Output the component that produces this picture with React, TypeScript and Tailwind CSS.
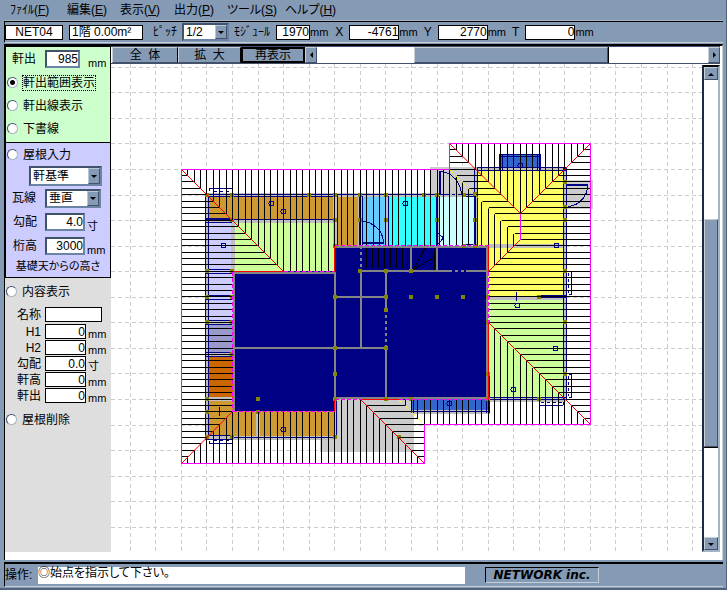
import { useState } from 'react'
import type { ReactNode } from 'react'

const MENUS = [
    { text: 'ﾌｧｲﾙ', mnemonic: 'F', width: 'w-[57px]' },
    { text: '編集', mnemonic: 'E', width: 'w-[53px]' },
    { text: '表示', mnemonic: 'V', width: 'w-[54px]' },
    { text: '出力', mnemonic: 'P', width: 'w-[53px]' },
    { text: 'ツール', mnemonic: 'S', width: 'w-[58px]' },
    { text: 'ヘルプ', mnemonic: 'H', width: 'w-[58px]' },
]

// Roof module: 1 unit = a quarter of the grid pitch
const UNIT = 6.39
const X = (n: number) => Math.floor(181.4 + UNIT * n) + 0.5
const Y = (n: number) => Math.floor(169.1 + UNIT * n) + 0.5

const line = (x1: number, y1: number, x2: number, y2: number) =>
    `M${X(x1)} ${Y(y1)}L${X(x2)} ${Y(y2)}`

const range = (from: number, to: number) =>
    Array.from({ length: to - from + 1 }, (_, i) => from + i)

const vertical = (from: number, to: number, top: (x: number) => number, bottom: (x: number) => number) =>
    range(from, to).map(x => line(x, top(x), x, bottom(x))).join('')

const horizontal = (from: number, to: number, left: (y: number) => number, right: (y: number) => number) =>
    range(from, to).map(y => line(left(y), y, right(y), y)).join('')

const HATCH = [
    // north-west wing
    vertical(1, 16, () => 0, x => x),
    vertical(17, 23, () => 0, () => 16),
    vertical(24, 42, () => 0, () => 12),
    vertical(43, 47, x => x - 42, () => 12),
    vertical(48, 52, x => x - 42, x => 64 - x),
    horizontal(1, 16, () => 0, y => y),
    horizontal(17, 38, () => 0, () => 8),
    horizontal(39, 45, () => 0, y => 46 - y),
    // north-east hip
    vertical(43, 53, () => -4, x => x - 46),
    vertical(54, 63, () => -4, x => 60 - x),
    horizontal(-3, -1, () => 42, y => y + 46),
    horizontal(0, 7, y => y + 42, y => y + 46),
    horizontal(8, 10, y => y + 42, () => 53),
    horizontal(-3, 6, y => 60 - y, () => 64),
    horizontal(7, 11, () => 53, () => 64),
    horizontal(12, 16, y => 64 - y, () => 64),
    horizontal(17, 24, () => 48, () => 64),
    horizontal(25, 39, y => y + 24, () => 64),
    // south side
    vertical(49, 63, x => x - 24, () => 40),
    vertical(38, 48, () => 36, () => 40),
    vertical(34, 37, () => 36, x => x + 2),
    vertical(24, 28, () => 36, () => 46),
    vertical(29, 37, x => x + 8, () => 46),
    horizontal(37, 39, y => y - 8, y => y - 2),
    horizontal(40, 45, y => y - 8, () => 38),
    vertical(8, 23, () => 38, () => 46),
    vertical(1, 7, x => 46 - x, () => 46),
].join('')

const HIPS = [
    line(0, 0, 16, 16), line(42, -4, 53, 7), line(64, -4, 53, 7), line(53, 11, 48, 16),
    line(48, 24, 64, 40), line(8, 38, 0, 46), line(28, 36, 38, 46),
].join('')

const RIDGE_ENDS = [
    line(8, 16, 16, 16), line(24, 12, 24, 16), line(48, 12, 48, 16),
    line(24, 36, 24, 38), line(28, 36, 34, 36), line(48, 24, 48, 36),
].join('')

const WALL_CONTACT = [
    line(16, 16, 24, 16), line(24, 12, 48, 12), line(8, 16, 8, 38), line(8, 38, 24, 38),
    line(24, 36, 28, 36), line(34, 36, 48, 36), line(48, 16, 48, 24),
].join('')

const OUTLINE = [[0, 0], [42, 0], [42, -4], [64, -4], [64, 40], [38, 40], [38, 46], [0, 46]]
    .map(([x, y]) => `${X(x)},${Y(y)}`).join(' ')

// x, y, width, height, colour
const ROOMS: [number, number, number, number, string][] = [
    [430, 167, 46, 29, '#cccccc'], [565, 180, 28, 29, '#cccccc'], [320, 399, 94, 53, '#cccccc'],
    [207, 194, 128, 27, '#cc9933'], [335, 194, 24, 52, '#cc9933'],
    [360, 194, 27, 52, '#66ccff'], [387, 194, 50, 52, '#33ffff'], [437, 194, 40, 52, '#ccffff'],
    [232, 220, 103, 52, '#ccff99'], [207, 220, 26, 103, '#ccccff'],
    [207, 323, 26, 31, '#9999cc'], [207, 354, 26, 44, '#cc6600'],
    [207, 398, 26, 41, '#cc9933'], [232, 411, 103, 28, '#cc9933'],
    [476, 169, 89, 128, '#ffff66'], [488, 297, 77, 103, '#ccff99'],
    [500, 155, 40, 14, '#3366cc'], [412, 399, 76, 13, '#3366cc'],
]

const WALLS =
    'M206 195H477M206 221H335M207 194V440M233 220V272M335 194V246M360 194V246M387 194V246' +
    'M437 194V246M476 169V246M474 169H566M565 167V400M488 246H565M488 298H566M488 400H566' +
    'M206 323H232M206 354H232M206 399H232M206 438H336M258 411V438M336 411V438M412 412H490'

const FRAMES =
    'M206 194.5H449M206 196.5H335M206 219.5H335M205.5 194V440M208.5 194V440M206 218.5H232M206 222.5H232' +
    'M206 269.5H232M206 273.5H232M206 295.5H232M206 299.5H232M206 320.5H232M206 324.5H232M206 352.5H232' +
    'M206 356.5H232M334.5 194V246M337.5 194V246M359.5 196V246M362.5 196V246M385.5 196V246M388.5 196V246' +
    'M436.5 196V246M439.5 196V246M474.5 168V246M477.5 168V246M477 167.5H566M477 170.5H566M563.5 168V400' +
    'M566.5 168V400M540 295.5H566M540 297.5H566M489 397.5H566M489 399.5H566M232 437.5H335M206 435.5H232' +
    'M206 439.5H232M336.5 399V437M464 194.5H477M464 196.5H477M464 244.5H477M499.5 154V170M502.5 154V170' +
    'M537.5 154V170M540.5 154V170M499 154.5H541M500 156.5H540M411.5 399V413M413.5 399V413M411 411.5H490' +
    'M486.5 399V413M489.5 376V413M209.5 191V188.5H232.5V191M209.5 441V443.5H232.5V441M571.5 271.5V294.5' +
    'M569 271.5H571.5M569 294.5H571.5M569 374.5H571.5V397.5H569M539.5 402V405.5H563M563.5 402V405' +
    'M516.5 292V301M219.5 407V416M412 399.5H384'

const PARTITIONS =
    'M233 348H386M335 272V411M361 247V348M386 271V399M335 297H386M360 271H488M411 247V271' +
    'M437 247V271M234 272V411M233 273H335M335 247H488M335 398H488M487 246V399'

// centre points of the posts
const POSTS = [
    [207, 195], [232, 195], [309, 195], [335, 195], [360, 195], [386, 195], [424, 195], [437, 195], [464, 195],
    [232, 220], [335, 220], [360, 220], [386, 220], [437, 220], [475, 220], [335, 246], [464, 246], [475, 246],
    [207, 271], [232, 271], [360, 271], [386, 271], [411, 271], [207, 297], [232, 297], [335, 297], [386, 297],
    [411, 297], [437, 297], [463, 297], [488, 297], [539, 297], [207, 322], [232, 322], [386, 310], [488, 322],
    [565, 322], [232, 354], [335, 348], [386, 348], [335, 374], [488, 374], [565, 374], [207, 399], [258, 399],
    [335, 399], [386, 399], [411, 399], [539, 399], [207, 412], [258, 412], [207, 437], [232, 437], [335, 437],
    [399, 437], [565, 182], [565, 207], [565, 220], [565, 271], [488, 399], [475, 194],
]

const SYMBOLS = [
    [271, 203], [283, 211], [223, 245], [405, 203], [520, 165], [556, 245],
    [517, 305], [555, 348], [513, 389], [283, 429], [449, 403],
]

const FloorPlan = () => (
    <svg
        className="block max-w-none"
        width="593"
        height="489"
        viewBox="111 64 593 489"
        shapeRendering="crispEdges"
        fill="none"
        role="img"
        aria-label="屋根伏図"
    >
        {/* Grid */}
        <g stroke="#cccccc" strokeDasharray="4 3">
            {range(0, 22).map(i => (
                <line key={i} x1={Math.floor(130.3 + i * 25.56) + 0.5} x2={Math.floor(130.3 + i * 25.56) + 0.5} y1={64} y2={552} />
            ))}
            {range(0, 18).map(i => (
                <line key={i} y1={Math.floor(67.2 + i * 25.56) + 0.5} y2={Math.floor(67.2 + i * 25.56) + 0.5} x1={111} x2={702} />
            ))}
        </g>

        {/* Rooms and walls */}
        {ROOMS.map(([x, y, w, h, color]) => (
            <rect key={`${x}-${y}`} x={x} y={y} width={w} height={h} fill={color} />
        ))}
        <path d={WALLS} stroke="#c0c0c0" strokeWidth={4} />
        <path d={FRAMES} stroke="#000084" />
        <path d="M214 191.5H232M214 440.5H232M568.5 273V293M568.5 376V396M541 402.5H562M440 194.5H474" stroke="#000084" strokeDasharray="3 3" />
        <rect x={233} y={271} width={102} height={140} fill="#000084" />
        <rect x={335} y={246} width={153} height={153} fill="#000084" />
        <path d={PARTITIONS} stroke="#848484" strokeWidth={2} />
        <path d="M386 312V346M361 249V269M452 271H466" stroke="#000084" strokeWidth={2} strokeDasharray="3 3" />

        {/* Stairs */}
        <path d="M366.5 248V268M372.5 248V268M378.5 248V268M384.5 248V268M390.5 248V268M396.5 248V268M402.5 248V268M407.5 248V268M413 270L434 257M413 270L425 248M434.5 250V270" stroke="#000000" />

        {/* Doors */}
        <path d="M362 221.5C373 221.5 383 231 383.5 242M440 171.5C452 171.5 461 183 461.5 195M587.5 186C587.5 197 578 206 568 206.5M438 233L443.5 238L438 244" stroke="#000084" />
        <path d="M362 243H384M440 171V195M567 185H588" stroke="#000084" strokeWidth={2} />

        {POSTS.map(([x, y]) => (
            <rect key={`${x}-${y}`} x={x - 2} y={y - 2} width={4} height={4} fill="#848400" />
        ))}

        {/* Roof */}
        <path d={HATCH} stroke="#000000" />
        <g stroke="#000084">
            {SYMBOLS.map(([x, y]) => (
                <circle key={`${x}-${y}`} cx={x + 0.5} cy={y + 0.5} r={2.5} />
            ))}
        </g>
        <path d={line(42, 0, 53, 11) + line(34, 36, 38, 40)} stroke="#ffff00" strokeDasharray="5 4" shapeRendering="auto" />
        <path d={HIPS} stroke="#ff0000" shapeRendering="auto" />
        <path d={WALL_CONTACT} stroke="#ff00ff" strokeDasharray="4 2" />
        <path d={RIDGE_ENDS} stroke="#ff0000" />
        <path d={line(53, 7, 53, 11)} stroke="#ff00ff" />
        <polygon points={OUTLINE} stroke="#ff00ff" shapeRendering="auto" />
    </svg>
)

const Arrow = ({ direction }: { direction: 'up' | 'down' | 'left' | 'right' }) => {
    const points = {
        up: '1,6 7,6 4,3',
        down: '1,3 7,3 4,6',
        left: '6,1 6,7 3,4',
        right: '3,1 3,7 6,4',
    }
    return (
        <svg width="8" height="8" viewBox="0 0 8 8" aria-hidden="true">
            <polygon points={points[direction]} fill="#000000" />
        </svg>
    )
}

const Select = ({ label, options, className }: { label: string; options: string[]; className: string }) => (
    <div className={`relative border-2 border-t-[#42526b] border-l-[#42526b] border-r-[#6b84a5] border-b-[#6b84a5] bg-white ${className}`}>
        <select aria-label={label} className="block h-full w-full appearance-none bg-white pl-0.5 leading-none outline-none">
            {options.map(option => <option key={option}>{option}</option>)}
        </select>
        <span className="pointer-events-none absolute inset-y-0 right-0 flex w-3 items-center justify-center border border-t-[#b5c6d6] border-l-[#b5c6d6] border-r-[#42526b] border-b-[#42526b] bg-[#849ab5]">
            <Arrow direction="down" />
        </span>
    </div>
)

const Measure = ({ label, value, className }: { label: string; value: string; className: string }) => (
    <label className="flex h-4 items-center">
        <span className="pr-1.5">{label}</span>
        <input defaultValue={value} className={`h-[15px] border border-black bg-white text-right outline-none ${className}`} />
        <span className="text-[11px]">mm</span>
    </label>
)

const Radio = ({ value, mode, onSelect }: { value: string; mode: string; onSelect: (value: string) => void }) => (
    <label className="flex h-[23px] items-center pl-px">
        <input
            type="radio"
            name="mode"
            checked={mode === value}
            onChange={() => onSelect(value)}
            className="mr-1 size-[11px] shrink-0 appearance-none rounded-full border border-t-[#42526b] border-l-[#42526b] border-r-[#a5b5c6] border-b-[#a5b5c6] bg-white outline-none checked:bg-[radial-gradient(circle,black_2px,white_3px)]"
        />
        <span className={`border border-dotted leading-[14px] ${mode === value ? 'border-black' : 'border-transparent'}`}>{value}</span>
    </label>
)

const Field = ({ label, value, unit }: { label: string; value: string; unit: string }) => (
    <label className="flex h-6 items-center">
        <span className="w-[39px] pl-[7px]">{label}</span>
        <input defaultValue={value} className="h-[18px] w-10 border-2 border-t-[#42526b] border-l-[#42526b] border-r-[#6b84a5] border-b-[#6b84a5] bg-white text-right outline-none" />
        <span className="self-end pl-0.5 text-[11px]">{unit}</span>
    </label>
)

const Detail = ({ label, value, unit }: { label: string; value: string; unit: string }) => (
    <label className="flex h-4 items-start">
        <span className="w-10 pr-1 text-right leading-4">{label}</span>
        <input defaultValue={value} className="h-[15px] w-[41px] border border-black bg-white text-right outline-none" />
        <span className="self-end pl-0.5 text-[11px] leading-3">{unit}</span>
    </label>
)

const ToolButton = ({ children, className }: { children: ReactNode; className: string }) => (
    <button className={`border bg-[#849ab5] leading-none ${className}`}>{children}</button>
)

const RAISED = 'border border-t-[#c6ced6] border-l-[#c6ced6] border-r-[#42526b] border-b-[#42526b] bg-[#849ab5]'

const App = () => {

    const [mode, setMode] = useState<string>('軒出範囲表示')

    return (
        <div className="flex h-screen flex-col border-r border-b-2 border-[#52637b] bg-[#849ab5] pr-[3px] pl-1 font-['Liberation_Sans','Noto_Sans_CJK_JP',sans-serif] text-[12px] leading-4 whitespace-nowrap text-black">

            {/* Menu */}
            <nav className="flex h-[21px] shrink-0 items-center border-b border-[#a5b5c6] pl-1.5 [font-feature-settings:'palt']">
                {MENUS.map(menu => (
                    <button key={menu.mnemonic} className={`shrink-0 text-left ${menu.width}`}>
                        {menu.text}(<u>{menu.mnemonic}</u>)
                    </button>
                ))}
            </nav>

            {/* Toolbar */}
            <div className="flex h-[22px] shrink-0 items-center border-t border-l border-b border-t-black border-l-black border-b-[#c6ced6]">
                <input aria-label="物件" defaultValue="NET04" className="h-[15px] w-[58px] border border-black bg-white text-center outline-none" />
                <input aria-label="階" defaultValue="1階 0.00m²" className="ml-1.5 h-[15px] w-[74px] border border-black bg-white pl-0.5 outline-none" />
                <span className="w-[39px] pl-2.5">ﾋﾟｯﾁ</span>
                <Select label="ピッチ" options={['1/2', '1/4']} className="h-[18px] w-[47px]" />
                <div className="flex pl-[5px]">
                    <Measure label="ﾓｼﾞｭｰﾙ" value="1970" className="w-[34px]" />
                </div>
                <div className="flex gap-1.5 pl-[7px]">
                    <Measure label="X" value="-4761" className="w-[50px]" />
                    <Measure label="Y" value="2770" className="w-[50px]" />
                    <Measure label="T" value="0" className="w-[50px]" />
                </div>
            </div>

            <div className="mt-px flex min-h-0 flex-1 border-t-2 border-l border-r border-t-black border-l-black border-r-[#c6ced6] bg-white pb-2">

                {/* Side panel */}
                <aside className="flex w-[106px] shrink-0 flex-col bg-[#dedede]">
                    <section className="border border-black bg-[#ccffcc] pb-0.5">
                        <label className="flex h-6 items-center">
                            <span className="w-[39px] pl-1.5">軒出</span>
                            <input defaultValue="985" className="h-[18px] w-[35px] border-2 border-t-[#42526b] border-l-[#42526b] border-r-[#6b84a5] border-b-[#6b84a5] bg-white text-right outline-none" />
                            <span className="self-end pl-2 text-[11px]">mm</span>
                        </label>
                        <Radio value="軒出範囲表示" mode={mode} onSelect={setMode} />
                        <Radio value="軒出線表示" mode={mode} onSelect={setMode} />
                        <Radio value="下書線" mode={mode} onSelect={setMode} />
                    </section>
                    <section className="border border-t-0 border-black bg-[#ccccff] pb-[3px]">
                        <Radio value="屋根入力" mode={mode} onSelect={setMode} />
                        <div className="flex h-5 pl-[23px]">
                            <Select label="基準" options={['軒基準', '桁基準']} className="h-5 w-[73px]" />
                        </div>
                        <div className="flex h-6 items-center">
                            <span className="w-[39px] pl-1.5">瓦線</span>
                            <Select label="瓦線" options={['垂直', '水平']} className="h-[19px] w-14" />
                        </div>
                        <Field label="勾配" value="4.0" unit="寸" />
                        <Field label="桁高" value="3000" unit="mm" />
                        <p className="text-center text-[11px] [font-feature-settings:'palt']">基礎天からの高さ</p>
                    </section>
                    <section className="pt-0.5">
                        <Radio value="内容表示" mode={mode} onSelect={setMode} />
                        <label className="flex h-[21px] items-center pt-0.5">
                            <span className="w-10 pr-1 text-right">名称</span>
                            <input className="h-[15px] w-[57px] border border-black bg-white outline-none" />
                        </label>
                        <Detail label="H1" value="0" unit="mm" />
                        <Detail label="H2" value="0" unit="mm" />
                        <Detail label="勾配" value="0.0" unit="寸" />
                        <Detail label="軒高" value="0" unit="mm" />
                        <Detail label="軒出" value="0" unit="mm" />
                        <div className="pt-1">
                            <Radio value="屋根削除" mode={mode} onSelect={setMode} />
                        </div>
                    </section>
                </aside>

                <main className="mr-0.5 flex min-w-0 flex-1 flex-col">
                    <div className="flex h-[18px] shrink-0 border-t border-b border-t-[#42526b] border-b-[#42526b] pl-px">
                        <ToolButton className="w-[66px] border-[#c6ced6] border-r-black border-b-[#42526b]">全&nbsp;&nbsp;体</ToolButton>
                        <ToolButton className="w-[63px] border-[#c6ced6] border-r-black border-b-[#42526b]">拡&nbsp;&nbsp;大</ToolButton>
                        <ToolButton className="w-16 border-2 border-black">再表示</ToolButton>
                        <button aria-label="左へ" className={`flex w-3 items-center justify-center ${RAISED}`}><Arrow direction="left" /></button>
                        <div className="flex min-w-0 flex-1 bg-white">
                            <div className="flex-[98]" />
                            <div className={`flex-[193] ${RAISED}`} />
                            <div className="flex-[100] border-l border-black" />
                        </div>
                        <button aria-label="右へ" className={`flex w-3 items-center justify-center ${RAISED}`}><Arrow direction="right" /></button>
                    </div>
                    <div className="flex min-h-0 flex-1">
                        <div className="min-w-0 flex-1 overflow-hidden">
                            <FloorPlan />
                        </div>
                        <div className="mt-px flex w-[18px] shrink-0 flex-col border-2 border-t-black border-l-[#212942] border-r-[#a5b5c6] border-b-[#a5b5c6] bg-white">
                            <button aria-label="上へ" className={`flex h-[13px] items-center justify-center ${RAISED}`}><Arrow direction="up" /></button>
                            <div className="flex-[140]" />
                            <div className={`flex-[227] ${RAISED}`} />
                            <div className="flex-[90] border-t border-black" />
                            <button aria-label="下へ" className={`flex h-[13px] items-center justify-center ${RAISED}`}><Arrow direction="down" /></button>
                        </div>
                    </div>
                </main>
            </div>

            {/* Status bar */}
            <footer className="mt-0.5 mb-px flex h-[25px] shrink-0 items-center border-t-2 border-b border-l border-t-black border-b-[#c6ced6] border-l-black">
                <span className="w-[33px] shrink-0">操作:</span>
                <output className="h-[17px] w-[427px] bg-white leading-[13px] [font-feature-settings:'palt']">◎始点を指示して下さい。</output>
                <div className="ml-5 h-4 w-[114px] border border-t-black border-l-black border-r-[#c6ced6] border-b-[#c6ced6] text-center font-['DejaVu_Sans',sans-serif] text-[12px] leading-[14px] font-bold italic">
                    NETWORK inc.
                </div>
            </footer>
        </div>
    )
}


export default App
